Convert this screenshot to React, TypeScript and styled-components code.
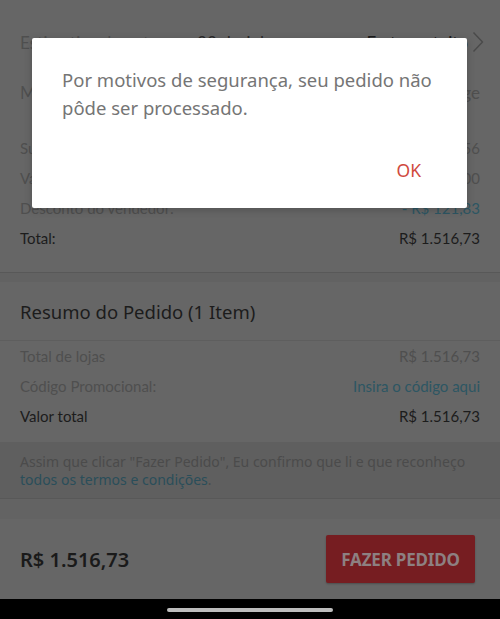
import React from "react";
import styled, { createGlobalStyle } from "styled-components";

const Global = createGlobalStyle`
  html, body { margin: 0; padding: 0; background: #666666; }
  body { width: 500px; height: 619px; overflow: hidden; font-family: Lato, "Noto Sans", sans-serif; }
  * { box-sizing: border-box; }
`;

const Page = styled.div`
  position: relative;
  width: 500px;
  height: 619px;
  display: flex;
  flex-direction: column;
  background: #666666;
  overflow: hidden;
`;

const Section = styled.section<{ $pt: number; $pb: number }>`
  display: flex;
  flex-direction: column;
  padding: ${(p) => p.$pt}px 20px ${(p) => p.$pb}px;
  background: #666666;
`;

const Separator = styled.div<{ $h: number }>`
  height: ${(p) => p.$h}px;
  background: #626262;
  border-top: 1px solid #585858;
  flex: none;
`;

const Row = styled.div<{ $h: number }>`
  height: ${(p) => p.$h}px;
  display: flex;
  align-items: center;
  justify-content: space-between;
  font-family: Lato, sans-serif;
  font-size: 15px;
  white-space: nowrap;
`;

const BigRow = styled(Row)`
  font-size: 17px;
`;

const Label = styled.span<{ $dark?: boolean }>`
  color: ${(p) => (p.$dark ? "#1c1c1c" : "#4f4f4f")};
`;

const Value = styled.span<{ $tone?: "dark" | "link" | "muted" }>`
  color: ${(p) =>
    p.$tone === "dark" ? "#1c1c1c" : p.$tone === "link" ? "#2d5663" : "#4f4f4f"};
`;

const Mid = styled.span`
  color: #2a2a2a;
  margin-left: 16px;
  flex: 1;
`;

const RightGroup = styled.span`
  display: flex;
  align-items: center;
  gap: 4px;
  color: #1c1c1c;
  margin-right: -4px;
`;

const Header = styled.div`
  height: 59px;
  display: flex;
  align-items: center;
  font-family: "Noto Sans", "Open Sans", sans-serif;
  font-size: 18.5px;
  color: #1c1c1c;
  border-bottom: 1px solid #5e5e5e;
  margin: 0 -20px;
  padding: 0 20px;
`;

const Terms = styled.div`
  background: #5f5f5f;
  padding: 11px 20px 10px;
  font-family: "Noto Sans", "Open Sans", sans-serif;
  font-size: 14px;
  line-height: 17.5px;
  color: #4b4b4b;
  border-bottom: 1px solid #585858;
  flex: none;
`;

const TermsLink = styled.span`
  color: #2a4e5a;
`;

const Gap = styled.div`
  height: 20px;
  background: #636363;
  flex: none;
`;

const BottomBar = styled.div`
  height: 80px;
  display: flex;
  align-items: center;
  justify-content: space-between;
  padding: 0 25px 0 20px;
  background: #666666;
  flex: none;
`;

const Price = styled.span`
  font-family: "Noto Sans", "Open Sans", sans-serif;
  font-weight: 600;
  font-size: 20px;
  color: #1a1a1a;
`;

const OrderButton = styled.button`
  width: 149px;
  height: 48px;
  border: none;
  border-radius: 2px;
  background: #761d21;
  color: #8d8081;
  font-family: "Noto Sans", "Open Sans", sans-serif;
  font-weight: 700;
  font-size: 17px;
  letter-spacing: -0.2px;
  padding: 0;
  box-shadow: 0 1px 2px rgba(0, 0, 0, 0.25);
`;

const SystemBar = styled.div`
  height: 21px;
  background: #000;
  display: flex;
  align-items: center;
  justify-content: center;
  flex: none;
`;

const HomeIndicator = styled.div`
  width: 166px;
  height: 4px;
  border-radius: 2px;
  background: #bdbdbd;
`;

const Dialog = styled.div`
  position: absolute;
  left: 32px;
  top: 38px;
  width: 435px;
  height: 170px;
  background: #ffffff;
  border-radius: 2px;
  padding: 28px 30px 0;
  display: flex;
  flex-direction: column;
  box-shadow: 0 2px 8px rgba(0, 0, 0, 0.2);
`;

const DialogText = styled.p`
  margin: 0;
  font-family: "Noto Sans", "Open Sans", sans-serif;
  font-size: 18.5px;
  line-height: 28px;
  color: #757575;
`;

const DialogActions = styled.div`
  display: flex;
  justify-content: flex-end;
  margin-top: 36px;
  padding-right: 16px;
`;

const OkButton = styled.span`
  font-family: "Noto Sans", "Open Sans", sans-serif;
  font-size: 17.5px;
  color: #d04a3e;
`;

const Chevron = () => (
  <svg width="12" height="22" viewBox="0 0 12 22" fill="none">
    <path d="M1.5 1.5 L10.5 11 L1.5 20.5" stroke="#4a4a4a" strokeWidth="1.4" />
  </svg>
);

export default function App() {
  return (
    <>
      <Global />
      <Page>
        <Section $pt={17} $pb={19}>
          <BigRow $h={50}>
            <Label>Estimativa de entrega</Label>
            <Mid>22 de Jul</Mid>
            <RightGroup>
              Frete gratuito
              <Chevron />
            </RightGroup>
          </BigRow>
          <BigRow $h={50}>
            <Label>Mensagem</Label>
            <Value>Deixe uma mensage</Value>
          </BigRow>
          <Row $h={16} />
          <Row $h={30}>
            <Label>Subtotal:</Label>
            <Value>R$ 1.638,56</Value>
          </Row>
          <Row $h={30}>
            <Label>Valor do frete:</Label>
            <Value>R$ 0,00</Value>
          </Row>
          <Row $h={30}>
            <Label>Desconto do vendedor:</Label>
            <Value $tone="link">- R$ 121,83</Value>
          </Row>
          <Row $h={30}>
            <Label $dark>Total:</Label>
            <Value $tone="dark">R$ 1.516,73</Value>
          </Row>
        </Section>
        <Separator $h={10} />
        <Section $pt={0} $pb={11}>
          <Header>Resumo do Pedido (1 Item)</Header>
          <Row $h={30}>
            <Label>Total de lojas</Label>
            <Value>R$ 1.516,73</Value>
          </Row>
          <Row $h={30}>
            <Label>Código Promocional:</Label>
            <Value $tone="link">Insira o código aqui</Value>
          </Row>
          <Row $h={30}>
            <Label $dark>Valor total</Label>
            <Value $tone="dark">R$ 1.516,73</Value>
          </Row>
        </Section>
        <Terms>
          Assim que clicar "Fazer Pedido", Eu confirmo que li e que reconheço{" "}
          <TermsLink>todos os termos e condições</TermsLink>.
        </Terms>
        <Gap />
        <BottomBar>
          <Price>R$ 1.516,73</Price>
          <OrderButton>FAZER PEDIDO</OrderButton>
        </BottomBar>
        <SystemBar>
          <HomeIndicator />
        </SystemBar>
        <Dialog>
          <DialogText>
            Por motivos de segurança, seu pedido não pôde ser processado.
          </DialogText>
          <DialogActions>
            <OkButton>OK</OkButton>
          </DialogActions>
        </Dialog>
      </Page>
    </>
  );
}
